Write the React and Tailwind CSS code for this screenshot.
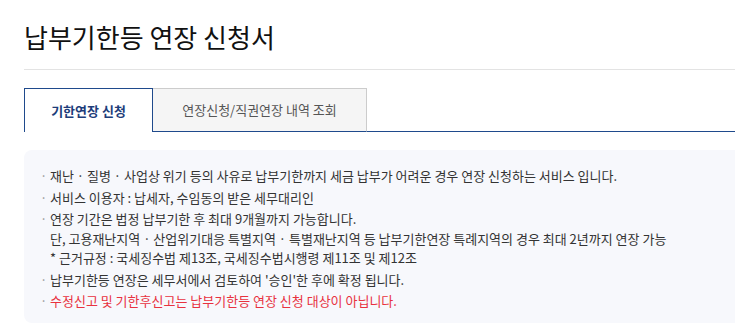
import React from 'react';

const font = "font-['Noto_Sans_CJK_KR','Noto_Sans',sans-serif]";

const notices = [
  { lines: ['재난 · 질병 · 사업상 위기 등의 사유로 납부기한까지 세금 납부가 어려운 경우 연장 신청하는 서비스 입니다.'] },
  { lines: ['서비스 이용자 : 납세자, 수임동의 받은 세무대리인'] },
  {
    lines: [
      '연장 기간은 법정 납부기한 후 최대 9개월까지 가능합니다.',
      '단, 고용재난지역 · 산업위기대응 특별지역 · 특별재난지역 등 납부기한연장 특례지역의 경우 최대 2년까지 연장 가능',
      '* 근거규정 : 국세징수법 제13조, 국세징수법시행령 제11조 및 제12조',
    ],
  },
  { lines: ["납부기한등 연장은 세무서에서 검토하여 '승인'한 후에 확정 됩니다."] },
  { lines: ['수정신고 및 기한후신고는 납부기한등 연장 신청 대상이 아닙니다.'], red: true },
];

export default function App() {
  return (
    <div className={`${font} bg-white pl-6 w-[735px] h-[328px] overflow-hidden`}>
      <h1 className="pt-[18px] pb-[14px] text-[26px] leading-[37px] font-normal text-[#111]">
        납부기한등 연장 신청서
      </h1>
      <div className="h-px bg-[#e3e3e3]" />

      <div className="mt-[18px] flex h-[44px]">
        <div className="w-[129px] flex items-center justify-center border border-b-0 border-[#1f4a8c] bg-white text-[13px] font-bold text-[#1d3d7a]">
          기한연장 신청
        </div>
        <div className="w-[214px] flex items-center justify-center border border-l-0 border-[#cccccc] border-b-[#1f4a8c] bg-[#f5f5f5] text-[13px] text-[#555]">
          연장신청/직권연장 내역 조회
        </div>
        <div className="flex-1 border-b border-[#1f4a8c]" />
      </div>

      <div className="mt-[18px] rounded-l-lg bg-[#f7f8fc] pt-4 pb-3 pl-4">
        <ul className="flex flex-col gap-[2px] text-[13px] leading-[19.5px] text-[#333]">
          {notices.map((n, i) => (
            <li key={i} className="flex">
              <span className="w-[10px] shrink-0 text-[#999]">·</span>
              <div className={n.red ? 'text-[#e8323f]' : ''}>
                {n.lines.map((l, j) => (
                  <div key={j} className="whitespace-nowrap">{l}</div>
                ))}
              </div>
            </li>
          ))}
        </ul>
      </div>
    </div>
  );
}
